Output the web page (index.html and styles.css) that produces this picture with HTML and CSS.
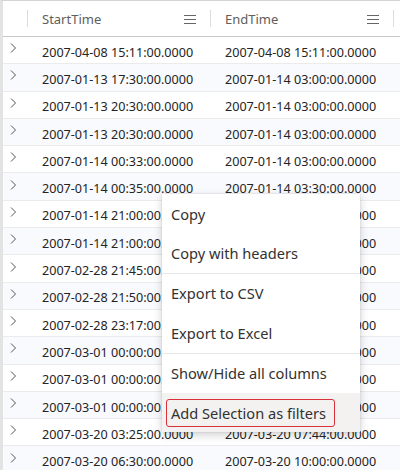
FILE: index.html
```html
<!DOCTYPE html>
<html>
<head>
<meta charset="utf-8">
<link rel="stylesheet" href="styles.css">
</head>
<body>
<div class="grid">
  <div class="head">
    <div class="hcell expander"><span class="sep"></span></div>
    <div class="hcell"><span class="htext">StartTime</span><svg class="menu-ico" width="12" height="10" viewBox="0 0 12 10"><path d="M0 1.5H12M0 5.5H12M0 9.5H12" stroke="#666" stroke-width="1"/></svg><span class="sep"></span></div>
    <div class="hcell"><span class="htext">EndTime</span><svg class="menu-ico" width="12" height="10" viewBox="0 0 12 10"><path d="M0 1.5H12M0 5.5H12M0 9.5H12" stroke="#666" stroke-width="1"/></svg><span class="sep"></span></div>
    <div class="hcell rest"></div>
  </div>
  <div class="body" id="body"></div>
</div>
<div class="ctx">
  <div class="item">Copy</div>
  <div class="item">Copy with headers</div>
  <div class="divider"></div>
  <div class="item">Export to CSV</div>
  <div class="item">Export to Excel</div>
  <div class="divider"></div>
  <div class="item">Show/Hide all columns</div>
  <div class="item hover"><span class="focus">Add Selection as filters</span></div>
</div>
<script>
var data = [
["2007-04-08 15:11:00.0000","2007-04-08 15:11:00.0000"],
["2007-01-13 17:30:00.0000","2007-01-14 03:00:00.0000"],
["2007-01-13 20:30:00.0000","2007-01-14 03:00:00.0000"],
["2007-01-13 20:30:00.0000","2007-01-14 03:00:00.0000"],
["2007-01-14 00:33:00.0000","2007-01-14 03:00:00.0000"],
["2007-01-14 00:35:00.0000","2007-01-14 03:30:00.0000"],
["2007-01-14 21:00:00.0000","2007-01-15 03:00:00.0000"],
["2007-01-14 21:00:00.0000","2007-01-15 03:00:00.0000"],
["2007-02-28 21:45:00.0000","2007-03-01 03:00:00.0000"],
["2007-02-28 21:50:00.0000","2007-03-01 03:00:00.0000"],
["2007-02-28 23:17:00.0000","2007-03-01 03:00:00.0000"],
["2007-03-01 00:00:00.0000","2007-03-01 06:00:00.0000"],
["2007-03-01 00:00:00.0000","2007-03-01 06:00:00.0000"],
["2007-03-01 00:00:00.0000","2007-03-01 06:00:00.0000"],
["2007-03-20 03:25:00.0000","2007-03-20 07:44:00.0000"],
["2007-03-20 06:30:00.0000","2007-03-20 10:00:00.0000"]
];
var b = document.getElementById('body');
var chev = '<svg width="7" height="10" viewBox="0 0 7 10"><path d="M1 0.5L5.5 5L1 9.5" fill="none" stroke="#555" stroke-width="1"/></svg>';
data.forEach(function(r, i){
  var row = document.createElement('div');
  row.className = 'row' + (i % 2 ? ' alt' : '');
  row.innerHTML = '<div class="cell expander">' + chev + '</div><div class="cell">' + r[0] + '</div><div class="cell">' + r[1] + '</div><div class="cell rest"></div>';
  b.appendChild(row);
});
</script>
</body>
</html>
```
FILE: styles.css
```css
html, body {
  margin: 0;
  padding: 0;
  background: #fff;
  overflow: hidden;
}
body {
  width: 400px;
  height: 471px;
  position: relative;
  font-family: "Noto Sans", "Open Sans", sans-serif;
}
.grid {
  border-top: 1px solid #d4d4d4;
  border-left: 3px solid #e3e3e3;
  height: 470px;
  box-sizing: border-box;
  overflow: hidden;
}
.head {
  display: grid;
  grid-template-columns: 25px 183px 183px minmax(0, 1fr);
  height: 35px;
  border-bottom: 1px solid #c8c8c8;
}
.hcell {
  position: relative;
  display: flex;
  align-items: center;
  padding-left: 14px;
  padding-right: 15px;
  color: #605e5c;
  font-size: 13px;
}
.hcell.expander, .hcell.rest { padding: 0; }
.htext { flex: 1; }
.sep {
  position: absolute;
  right: 0;
  top: 9px;
  height: 17px;
  border-right: 1px solid #dcdcdc;
}
.row {
  display: grid;
  grid-template-columns: 25px 183px 183px minmax(0, 1fr);
  height: 27.3px;
  box-sizing: border-box;
  border-bottom: 1px solid #ebebeb;
  background: #fff;
}
.row.alt { background: #f9fafd; }
.cell {
  display: flex;
  align-items: center;
  padding-left: 14px;
  padding-top: 4px;
  font-size: 12.6px;
  color: #252423;
  white-space: nowrap;
  overflow: hidden;
}
.cell.rest { padding: 0; }
.cell.expander {
  padding: 0 0 4px 7px;
}
.ctx {
  position: absolute;
  left: 162px;
  top: 194px;
  width: 198px;
  background: #fff;
  box-shadow: 0 3px 9px rgba(0,0,0,0.18), 0 0 2px rgba(0,0,0,0.12);
}
.item {
  height: 39.4px;
  display: flex;
  align-items: center;
  padding-left: 9px;
  font-size: 14.6px;
  color: #323130;
}
.item.hover { background: #f3f2f1; padding-left: 4px; }
.focus {
  border: 1.5px solid #d9303a;
  border-radius: 3px;
  padding: 3px 8px 3px 4px;
}
.divider {
  height: 1px;
  background: #e8e8e8;
}
```
